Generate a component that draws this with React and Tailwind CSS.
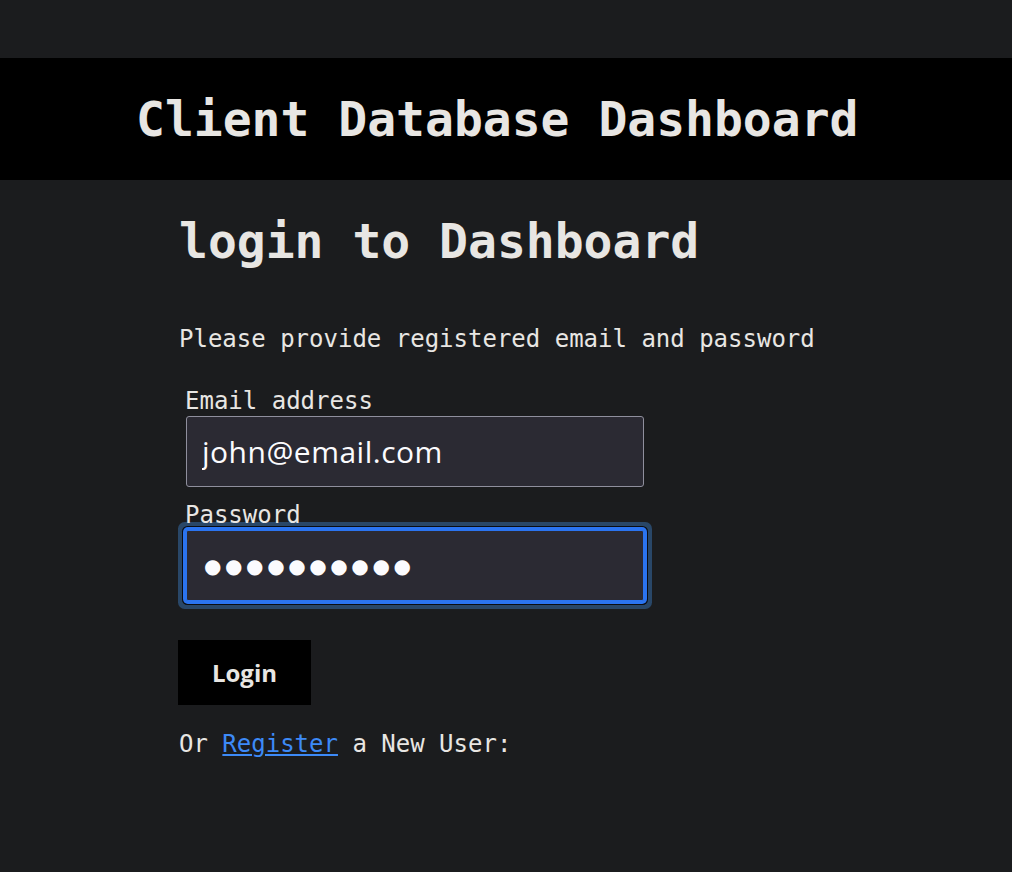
export default function App() {
    return (
        <div className="min-h-[872px] bg-[#1b1c1e] text-[#e8e6e3] font-['DejaVu_Sans_Mono',monospace] pt-[58px]">
            <header className="h-[122px] bg-black flex items-center pl-[136px]">
                <h1 className="text-[48px] leading-[48px] font-bold">Client Database Dashboard</h1>
            </header>

            <main className="pl-[179px]">
                <h2 className="mt-[37px] text-[48px] leading-[48px] font-bold">login to Dashboard</h2>

                <p className="mt-[62px] text-[24px] leading-[24px]">Please provide registered email and password</p>

                <form className="mt-[38px] ml-[6px]" onSubmit={(e) => e.preventDefault()}>
                    <label className="block text-[24px] leading-[24px]">Email address</label>
                    <input
                        type="email"
                        defaultValue="john@email.com"
                        className="mt-[3px] ml-px block w-[458px] h-[71px] px-[15px] rounded-[3px] bg-[#2b2a33] border border-[#8f8f9d] text-[30px] tracking-[0.5px] text-[#fbfbfe] font-['Open_Sans',sans-serif] outline-none"
                    />

                    <label className="block mt-[16px] text-[24px] leading-[24px]">Password</label>
                    <input
                        type="text"
                        readOnly
                        defaultValue="●●●●●●●●●●"
                        className="mt-[3px] ml-px block w-[458px] h-[71px] px-[17px] rounded-[2px] bg-[#2b2a33] border border-[#2b74f0] text-[20px] tracking-[3.6px] text-[#fbfbfe] font-['DejaVu_Sans',sans-serif] outline-none shadow-[0_0_0_3px_#2b74f0,0_0_0_4px_#0c0d10,0_0_0_8px_#294768]"
                    />

                    <button
                        type="submit"
                        className="mt-[39px] -ml-[7px] block w-[133px] h-[65px] bg-black text-[24px] font-bold font-['Open_Sans',sans-serif] text-[#e8e6e3]"
                    >
                        Login
                    </button>
                </form>

                <p className="mt-[27px] text-[24px] leading-[24px]">
                    Or <a href="#" className="text-[#3d8af7] underline">Register</a> a New User:
                </p>
            </main>
        </div>
    );
}
